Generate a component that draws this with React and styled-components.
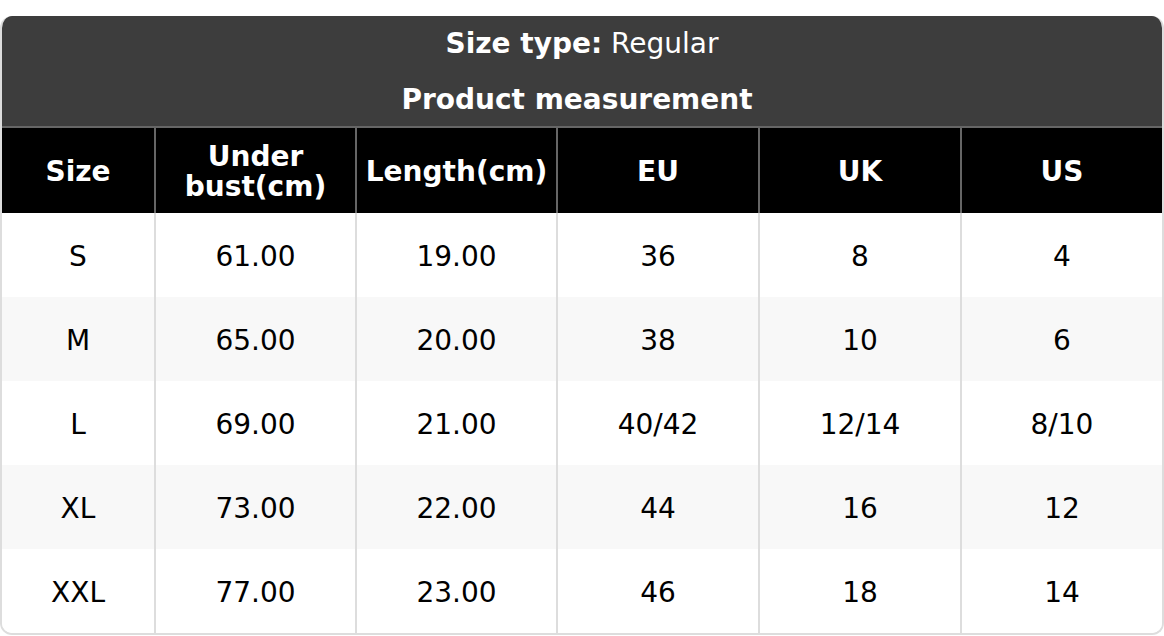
import React from "react";
import styled, { createGlobalStyle } from "styled-components";

const GlobalStyle = createGlobalStyle`
  body {
    margin: 0;
    padding-top: 16px;
    background: #ffffff;
    font-family: "DejaVu Sans", "Liberation Sans", sans-serif;
  }
`;

const columns = ["Size", "Under bust(cm)", "Length(cm)", "EU", "UK", "US"];
const widths = [153, 201, 201, 202, 202, 201];

const rows = [
  ["S", "61.00", "19.00", "36", "8", "4"],
  ["M", "65.00", "20.00", "38", "10", "6"],
  ["L", "69.00", "21.00", "40/42", "12/14", "8/10"],
  ["XL", "73.00", "22.00", "44", "16", "12"],
  ["XXL", "77.00", "23.00", "46", "18", "14"],
];

export default function App() {
  return (
    <>
      <GlobalStyle />
      <Card>
        <Caption>
          <CaptionLine>
            <b>Size type:</b> Regular
          </CaptionLine>
          <CaptionLine $shift>
            <b>Product measurement</b>
          </CaptionLine>
        </Caption>
        <Table>
          <colgroup>
            {widths.map((w, i) => (
              <col key={i} style={{ width: w }} />
            ))}
          </colgroup>
          <thead>
            <tr>
              {columns.map((c) => (
                <Th key={c}>{c === "Under bust(cm)" ? <>Under<br />bust(cm)</> : c}</Th>
              ))}
            </tr>
          </thead>
          <tbody>
            {rows.map((r, i) => (
              <Tr key={r[0]} $striped={i % 2 === 1}>
                {r.map((v, j) => (
                  <Td key={j}>{v}</Td>
                ))}
              </Tr>
            ))}
          </tbody>
        </Table>
      </Card>
    </>
  );
}

const Card = styled.div`
  width: 1164px;
  box-sizing: border-box;
  border: 2px solid #dddddd;
  border-top: none;
  border-radius: 12px;
  overflow: hidden;
`;

const Caption = styled.div`
  background: #3d3d3d;
  color: #ffffff;
  display: flex;
  flex-direction: column;
`;

const CaptionLine = styled.div`
  height: 56px;
  line-height: 56px;
  text-align: center;
  font-size: 28px;
  font-weight: 400;
  padding-right: ${(p) => (p.$shift ? "10px" : "0")};

  b {
    font-weight: 700;
  }
`;

const Table = styled.table`
  width: 100%;
  table-layout: fixed;
  border-collapse: collapse;
  margin-top: -2px;
`;

const Th = styled.th`
  height: 86px;
  box-sizing: border-box;
  padding: 2px 8px 0;
  background: #000000;
  color: #ffffff;
  font-size: 28px;
  font-weight: 700;
  line-height: 30px;
  text-align: center;
  border: 2px solid #666666;
  border-bottom: none;

  &:first-child {
    border-left: none;
  }
  &:last-child {
    border-right: none;
  }
`;

const Tr = styled.tr`
  background: ${(p) => (p.$striped ? "#f8f8f8" : "#ffffff")};
`;

const Td = styled.td`
  height: 84px;
  box-sizing: border-box;
  padding: 2px 0 0;
  font-size: 28px;
  color: #000000;
  text-align: center;
  border-left: 2px solid #dddddd;
  border-right: 2px solid #dddddd;

  &:first-child {
    border-left: none;
  }
  &:last-child {
    border-right: none;
  }
`;
